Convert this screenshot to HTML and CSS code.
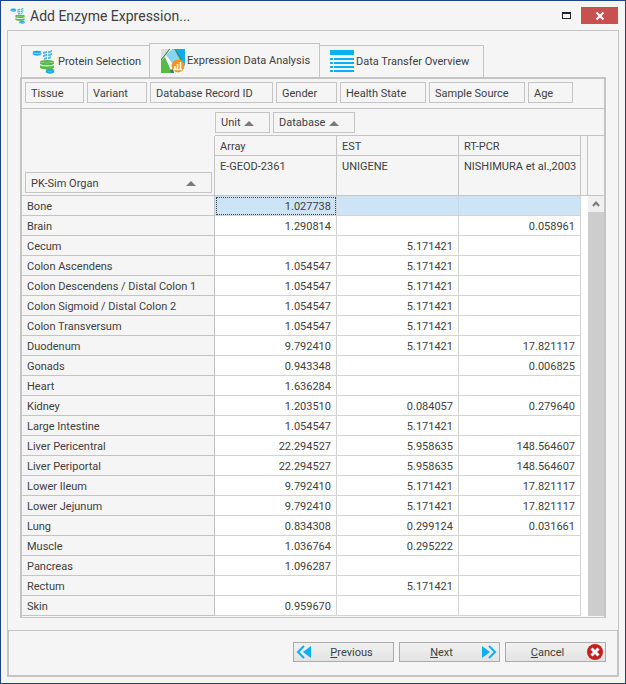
FILE: index.html
```html
<!DOCTYPE html>
<html lang="en">
<head>
<meta charset="utf-8">
<title>Add Enzyme Expression...</title>
<link rel="stylesheet" href="styles.css">
</head>
<body>
<svg class="defs" aria-hidden="true">
  <symbol id="protein" viewBox="0 0 24 24">
    <g fill="#1cabe6">
      <ellipse cx="5" cy="2" rx="4.300" ry="1.200"/><path d="M.7 2.800c1.500 1.200 7 1.200 8.600 0v1.500c-1 1.800-7.600 1.800-8.600 0z"/>
      <ellipse cx="18" cy="20" rx="4.200" ry="1.200"/><path d="M13.800 20.500c1.500 1 7 1 8.400 0v1.800c-1 1.800-7.400 1.800-8.400 0z"/>
    </g>
    <path d="M11 2l4-1v2l-4 1zM11 5l4-1v2l-4 1zM12 8l3-1v2l-3 1zM16 1.500l4-1.500v2l-4 1.500zM16 4.500L20 3v2l-4 1.500zM16 7.500L19 6v2l-3 1.500z" fill="#49b9e6"/>
    <g fill="#57b947">
      <ellipse cx="15" cy="11.500" rx="7" ry="1.500"/><path d="M8 12c2 1.600 12 1.600 14 0v2c-2 1.700-12 1.700-14 0z"/>
      <path d="M8 15.200c2 1.600 12 1.600 14 0v2.500c-2 2-12 2-14 0z"/>
    </g>
  </symbol>
</svg>
<div class="window">
  <header class="titlebar">
    <svg class="app-icon" aria-hidden="true"><use href="#protein"/></svg>
    <h1>Add Enzyme Expression...</h1>
    <button class="maximize" aria-label="Maximize"></button>
    <button class="close" aria-label="Close"><svg viewBox="0 0 10 8"><path d="M1.500 0.500l7 7M8.500 0.500l-7 7" stroke="#fff" stroke-width="2"/></svg></button>
  </header>
  <main class="pane">
    <nav class="tabs">
      <button class="tab tab-first"><svg class="tab-icon" aria-hidden="true"><use href="#protein"/></svg>Protein Selection</button>
      <button class="tab tab-active"><svg class="tab-icon" viewBox="0 0 24 24" aria-hidden="true">
        <path fill="#fff" d="M0 0h24v24H0z"/><path fill="#dcdedf" d="M0 0h8L0 9z"/><path fill="#57b947" d="M0 12l4-4 7 16H0z"/><path fill="#86d5f7" d="M5 6l6-6h2l7 11-9 3z"/><path fill="#0eaeea" d="M14 0h10v17l-4-6z"/><path fill="#3c8f52" d="M13 0h1.500L21 11l-1 1zM0 10L8 0h1.500L0 12z"/><path fill="#2f7d70" d="M9 21l3-1 1 4H10z"/>
        <circle cx="17" cy="17" r="6.500" fill="#f7941d"/><path stroke="#fff" stroke-width="1.500" d="M14 20v-3M16.500 20v-5M19.500 20v-7M12.500 20.500h8.500"/></svg>Expression Data Analysis</button>
      <button class="tab tab-last"><svg class="tab-icon" viewBox="0 0 24 24" aria-hidden="true"><path fill="#0bb0f0" d="M0 0h24v5H0zM0 8h3v2H0zM4 8h20v2H4zM0 12h3v2H0zM4 12h20v2H4zM0 16h3v2H0zM4 16h20v2H4zM0 20h3v2H0zM4 20h20v2H4z"/></svg>Data Transfer Overview</button>
    </nav>
    <section class="page">
      <div class="filters">
        <button class="field tissue">Tissue</button>
        <button class="field variant">Variant</button>
        <button class="field record">Database Record ID</button>
        <button class="field gender">Gender</button>
        <button class="field health">Health State</button>
        <button class="field source">Sample Source</button>
        <button class="field age">Age</button>
      </div>
      <div class="pivot">
        <table>
          <colgroup><col class="c-organ"><col class="c-data"><col class="c-data"><col class="c-data"><col></colgroup>
          <thead>
            <tr class="r-fields">
              <td class="blank"></td>
              <td colspan="4" class="col-fields"><div class="field-row"><button class="field unit">Unit<i class="sort"></i></button><button class="field database">Database<i class="sort"></i></button></div></td>
            </tr>
            <tr class="r-unit"><th rowspan="2" class="corner"><button class="field organ">PK-Sim Organ<i class="sort"></i></button></th><th>Array</th><th>EST</th><th>RT-PCR</th><th rowspan="2"></th></tr>
            <tr class="r-db"><th>E-GEOD-2361</th><th>UNIGENE</th><th>NISHIMURA et al.,2003</th></tr>
          </thead>
          <tbody>
            <tr class="selected"><th>Bone</th><td class="focused">1.027738</td><td></td><td></td><td></td></tr>
            <tr><th>Brain</th><td>1.290814</td><td></td><td>0.058961</td><td></td></tr>
            <tr><th>Cecum</th><td></td><td>5.171421</td><td></td><td></td></tr>
            <tr><th>Colon Ascendens</th><td>1.054547</td><td>5.171421</td><td></td><td></td></tr>
            <tr><th>Colon Descendens / Distal Colon 1</th><td>1.054547</td><td>5.171421</td><td></td><td></td></tr>
            <tr><th>Colon Sigmoid / Distal Colon 2</th><td>1.054547</td><td>5.171421</td><td></td><td></td></tr>
            <tr><th>Colon Transversum</th><td>1.054547</td><td>5.171421</td><td></td><td></td></tr>
            <tr><th>Duodenum</th><td>9.792410</td><td>5.171421</td><td>17.821117</td><td></td></tr>
            <tr><th>Gonads</th><td>0.943348</td><td></td><td>0.006825</td><td></td></tr>
            <tr><th>Heart</th><td>1.636284</td><td></td><td></td><td></td></tr>
            <tr><th>Kidney</th><td>1.203510</td><td>0.084057</td><td>0.279640</td><td></td></tr>
            <tr><th>Large Intestine</th><td>1.054547</td><td>5.171421</td><td></td><td></td></tr>
            <tr><th>Liver Pericentral</th><td>22.294527</td><td>5.958635</td><td>148.564607</td><td></td></tr>
            <tr><th>Liver Periportal</th><td>22.294527</td><td>5.958635</td><td>148.564607</td><td></td></tr>
            <tr><th>Lower Ileum</th><td>9.792410</td><td>5.171421</td><td>17.821117</td><td></td></tr>
            <tr><th>Lower Jejunum</th><td>9.792410</td><td>5.171421</td><td>17.821117</td><td></td></tr>
            <tr><th>Lung</th><td>0.834308</td><td>0.299124</td><td>0.031661</td><td></td></tr>
            <tr><th>Muscle</th><td>1.036764</td><td>0.295222</td><td></td><td></td></tr>
            <tr><th>Pancreas</th><td>1.096287</td><td></td><td></td><td></td></tr>
            <tr><th>Rectum</th><td></td><td>5.171421</td><td></td><td></td></tr>
            <tr><th>Skin</th><td>0.959670</td><td></td><td></td><td></td></tr>
          </tbody>
        </table>
        <div class="rail">
          <div class="rail-fields"></div>
          <div class="rail-head"></div>
          <div class="scrollbar"><button class="scroll-up" aria-label="Scroll up"><svg viewBox="0 0 8 6"><path d="M1 5l3-3.500L7 5" fill="none" stroke="#7a7a7a" stroke-width="2"/></svg></button></div>
        </div>
      </div>
    </section>
  </main>
  <footer class="actions">
    <button class="action"><svg class="action-icon" viewBox="0 0 16 16" aria-hidden="true"><path fill="#0bb0f0" d="M15 2v12L7 8z"/><path d="M8 2L2 8l6 6" fill="none" stroke="#0bb0f0" stroke-width="2"/></svg><span><u>P</u>revious</span></button>
    <button class="action"><span><u>N</u>ext</span><svg class="action-icon" viewBox="0 0 16 16" aria-hidden="true"><path fill="#0bb0f0" d="M1 2v12l8-6z"/><path d="M8 2l6 6-6 6" fill="none" stroke="#0bb0f0" stroke-width="2"/></svg></button>
    <button class="action"><span><u>C</u>ancel</span><svg class="action-icon" viewBox="0 0 16 16" aria-hidden="true"><circle cx="8" cy="8" r="8" fill="#c5211c"/><path d="M4.500 4.500l7 7M11.500 4.500l-7 7" stroke="#fff" stroke-width="3"/></svg></button>
  </footer>
</div>
</body>
</html>
```
FILE: styles.css
```css
* { box-sizing: border-box; }
body, h1 { margin: 0; }
body, button { font: 11px/16px Roboto, Tahoma, sans-serif; color: #404040; }
button { padding: 0; border: 0; background: none; }
.defs { position: absolute; width: 0; height: 0; }

.window {
  display: flex; flex-direction: column; min-height: 100vh;
  padding: 0 6px 6px; border: 1px solid #1c4587; background: #f5f5f5;
}

.titlebar { display: flex; align-items: center; height: 29px; padding-left: 3px; }
.app-icon { width: 16px; height: 16px; margin-right: 4px; }
.titlebar h1 { flex: 1; font: 14px/20px Roboto, sans-serif; }
.maximize { width: 9px; height: 7px; margin-right: 10px; border: 1px solid #222; border-top-width: 2px; }
.close { display: flex; align-items: center; justify-content: center; width: 37px; height: 17px; margin-right: 1px; background: #c75050; }
.close svg { width: 10px; height: 8px; }

.pane { flex: 1; padding: 12px 12px 12px; border: 1px solid #c4c4c4; border-bottom: 0; }
.tabs { display: flex; align-items: flex-end; padding-left: 1px; }
.tab {
  display: flex; align-items: center; height: 32px; padding-right: 10px;
  border: 1px solid #c4c4c4; border-bottom: 0; white-space: nowrap;
}
.tab-first { width: 128px; padding-left: 10px; border-right: 0; }
.tab-active { width: 171px; height: 34px; padding-left: 11px; }
.tab-last { width: 164px; padding-left: 10px; border-left: 0; }
.tab-icon { flex: none; width: 24px; height: 24px; margin-right: 2px; }

.page { border: 2px solid #c4c4c4; border-bottom-width: 1px; }
.filters { display: flex; gap: 3px; height: 30px; padding: 3px; border-bottom: 1px solid #c4c4c4; }
.field {
  display: flex; align-items: center; justify-content: space-between; height: 21px;
  padding: 2px 5px 0; border: 1px solid #c4c4c4; white-space: nowrap;
}
.tissue { width: 59px; }
.variant { width: 60px; }
.record { width: 123px; }
.gender { width: 61px; }
.health { width: 86px; }
.source { width: 96px; }
.age { width: 45px; }
.unit { width: 55px; }
.database { width: 82px; }
.organ { width: 187px; }
.sort { border: 5px solid transparent; border-top: 0; border-bottom-color: #7b7b7b; margin-right: 10px; }

.pivot { display: flex; padding-bottom: 1px; }
table { flex: 1; table-layout: fixed; width: 0; border-collapse: separate; border-spacing: 0; background: #fff; }
th, td { padding: 2px 5px 0; font-weight: normal; text-align: left; white-space: nowrap; border: 0 solid #c4c4c4; border-width: 0 1px 1px 0; }
thead, tbody th { background: #f5f5f5; }
.c-organ { width: 193px; }
.c-data { width: 122px; }
.r-fields { height: 27px; }
.r-fields .blank { border: 0; }
.r-fields .col-fields { padding: 0; border-right: 0; }
.field-row { display: flex; gap: 3px; }
.r-unit { height: 20px; }
.r-db { height: 40px; }
.r-db th { vertical-align: top; padding-top: 3px; }
.r-unit .corner { padding: 0 3px 2px; vertical-align: bottom; }
tbody tr { height: 20px; }
tbody td { text-align: right; border-color: #d3d3d3; }
tbody td:last-child { border: 0; }
.selected td:not(:last-child) { background: #cde4f7; }
.selected .focused { outline: 1px dotted #404040; outline-offset: -2px; }

.rail { display: flex; flex-direction: column; width: 16px; }
.rail-fields { height: 27px; border-bottom: 1px solid #c4c4c4; }
.rail-head { height: 60px; border-bottom: 1px solid #c4c4c4; }
.scrollbar { flex: 1; background: #cdcdcd; }
.scroll-up { display: flex; align-items: center; justify-content: center; width: 16px; height: 16px; background: #f0f0f0; }
.scroll-up svg { width: 8px; height: 6px; }

.actions {
  display: flex; justify-content: flex-end; gap: 5px; padding: 11px 11px 13px;
  border: 2px solid #c4c4c4; border-top-width: 1px;
}
.action {
  display: flex; align-items: center; width: 101px; height: 20px; padding: 0 2px;
  border: 1px solid #ababab; background: linear-gradient(#f1f1f1, #e3e3e3);
}
.action span { flex: 1; padding-top: 2px; text-align: center; }
.action-icon { width: 16px; height: 16px; }
```
